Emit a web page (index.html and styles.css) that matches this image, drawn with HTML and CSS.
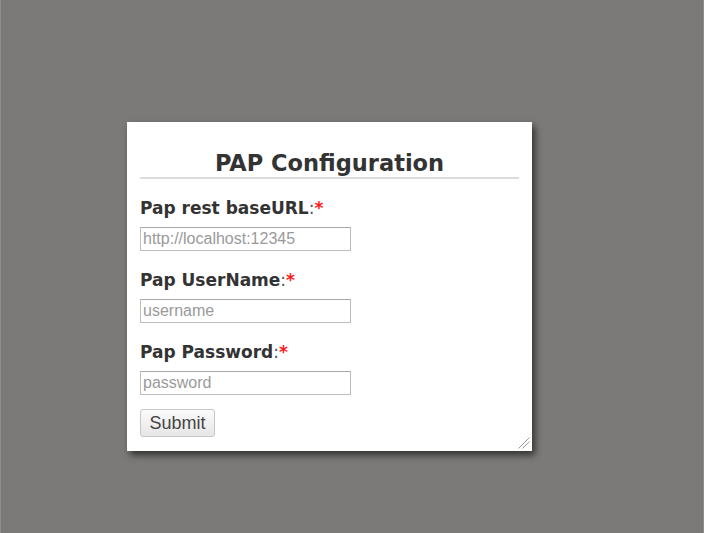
FILE: index.html
```html
<!DOCTYPE html>
<html>
<head>
<meta charset="utf-8">
<title>PAP Configuration</title>
<link rel="stylesheet" href="styles.css">
</head>
<body>
<div class="frame">
  <form class="card">
    <h1 class="title">PAP Configuration</h1>
    <div class="field">
      <label class="label">Pap rest baseURL<span class="colon">:</span><span class="req">*</span></label>
      <input class="input" type="text" placeholder="http://localhost:12345">
    </div>
    <div class="field">
      <label class="label">Pap UserName<span class="colon">:</span><span class="req">*</span></label>
      <input class="input" type="text" placeholder="username">
    </div>
    <div class="field">
      <label class="label">Pap Password<span class="colon">:</span><span class="req">*</span></label>
      <input class="input" type="password" placeholder="password">
    </div>
    <button class="submit" type="button">Submit</button>
    <svg class="grip" width="12" height="12" viewBox="0 0 12 12">
      <line x1="11.5" y1="0.5" x2="0.5" y2="11.5" stroke="#9a9a9a" stroke-width="1"/>
      <line x1="11.5" y1="4.5" x2="4.5" y2="11.5" stroke="#9a9a9a" stroke-width="1"/>
    </svg>
  </form>
</div>
</body>
</html>
```
FILE: styles.css
```css
html, body {
  margin: 0;
  padding: 0;
}
body {
  background: #7b7a78;
  font-family: "DejaVu Sans", "Liberation Sans", sans-serif;
}
.frame {
  height: 533px;
  box-sizing: border-box;
  border-left: 1px solid #8e8d8b;
  border-right: 1px solid #8e8d8b;
  padding: 122px 0 0 126px;
}
.card {
  position: relative;
  width: 405px;
  box-sizing: border-box;
  background: #ffffff;
  padding: 28px 13px 14px;
  box-shadow: 3px 4px 7px rgba(0, 0, 0, 0.6);
  display: flex;
  flex-direction: column;
  align-items: flex-start;
}
.title {
  align-self: stretch;
  margin: 0;
  font-size: 22.5px;
  line-height: 26px;
  font-weight: bold;
  color: #333333;
  text-align: center;
  padding-bottom: 1px;
  border-bottom: 2px solid #dcdcdc;
}
.field {
  display: flex;
  flex-direction: column;
  align-items: flex-start;
}
.label {
  margin-top: 19px;
  font-size: 17px;
  line-height: 20px;
  font-weight: bold;
  color: #333333;
}
.colon {
  font-weight: normal;
  color: #555555;
}
.req {
  color: #ff1a1a;
  font-weight: bold;
}
.input {
  margin: 9px 0 0;
  width: 211px;
  height: 24px;
  box-sizing: border-box;
  border: 1px solid #bdbdbd;
  border-top-color: #a9a9a9;
  padding: 0 2px;
  font-family: "Liberation Sans", Arial, sans-serif;
  font-size: 16px;
  color: #333;
  background: #fff;
  outline: none;
}
.input::placeholder {
  color: #9a9a9a;
}
.submit {
  margin-top: 14px;
  width: 75px;
  height: 28px;
  box-sizing: border-box;
  padding: 0;
  border: 1px solid #c6c6c6;
  border-radius: 3px;
  background: linear-gradient(#fbfbfb, #e6e6e6);
  font-family: "Liberation Sans", Arial, sans-serif;
  font-size: 18px;
  color: #444444;
}
.grip {
  position: absolute;
  right: 2px;
  bottom: 2px;
}
```
